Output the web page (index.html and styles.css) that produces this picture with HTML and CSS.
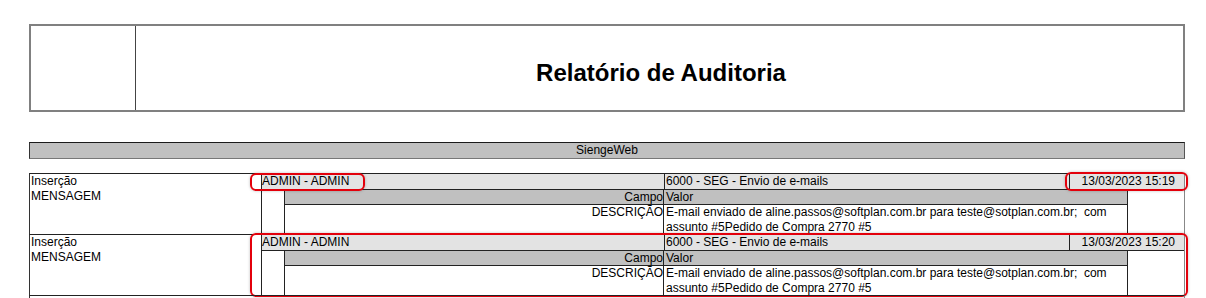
FILE: index.html
```html
<!DOCTYPE html>
<html lang="pt-BR">
<head>
<meta charset="utf-8">
<title>Relatório de Auditoria</title>
<link rel="stylesheet" href="styles.css">
</head>
<body>
<div class="page">
  <div class="header-box">
    <div class="logo-cell"></div>
    <div class="title-cell"><h1 class="title">Relatório de Auditoria</h1></div>
  </div>

  <div class="system-bar">SiengeWeb</div>

  <div class="records">
    <div class="record">
      <div class="rec-left">Inserção<br>MENSAGEM</div>
      <div class="rec-right">
        <div class="rec-head">
          <div class="c-user">ADMIN - ADMIN</div>
          <div class="c-op">6000 - SEG - Envio de e-mails</div>
          <div class="c-date">13/03/2023 15:19</div>
        </div>
        <div class="rec-body">
          <div class="indent"></div>
          <div class="fields">
            <div class="f-head">
              <div class="f-name">Campo</div>
              <div class="f-val">Valor</div>
            </div>
            <div class="f-row">
              <div class="f-name">DESCRIÇÃO</div>
              <div class="f-val">E-mail enviado de aline.passos@softplan.com.br para teste@sotplan.com.br;&nbsp; com assunto #5Pedido de Compra 2770 #5</div>
            </div>
          </div>
          <div class="trail"></div>
        </div>
      </div>
      <div class="mark mark-user"></div>
      <div class="mark mark-date"></div>
    </div>

    <div class="record">
      <div class="rec-left">Inserção<br>MENSAGEM</div>
      <div class="rec-right">
        <div class="rec-head">
          <div class="c-user">ADMIN - ADMIN</div>
          <div class="c-op">6000 - SEG - Envio de e-mails</div>
          <div class="c-date">13/03/2023 15:20</div>
        </div>
        <div class="rec-body">
          <div class="indent"></div>
          <div class="fields">
            <div class="f-head">
              <div class="f-name">Campo</div>
              <div class="f-val">Valor</div>
            </div>
            <div class="f-row">
              <div class="f-name">DESCRIÇÃO</div>
              <div class="f-val">E-mail enviado de aline.passos@softplan.com.br para teste@sotplan.com.br;&nbsp; com assunto #5Pedido de Compra 2770 #5</div>
            </div>
          </div>
          <div class="trail"></div>
        </div>
      </div>
      <div class="mark mark-all"></div>
    </div>

    <div class="record record-cut"></div>
  </div>
</div>
</body>
</html>
```

FILE: styles.css
```css
html, body {
  margin: 0;
  padding: 0;
  background: #ffffff;
}

body {
  font-family: "Liberation Sans", Arial, sans-serif;
  font-size: 12px;
  color: #000;
  overflow: hidden;
}

.page {
  margin-left: 29px;
  width: 1156px;
  padding-top: 24px;
}

.header-box {
  display: flex;
  height: 84px;
  border: 2px solid #808080;
}

.logo-cell {
  width: 104px;
  border-right: 1px solid #444;
}

.title-cell {
  flex: 1;
  display: flex;
  align-items: center;
  justify-content: center;
  padding-top: 9px;
  padding-left: 3px;
}

.title {
  margin: 0;
  font-size: 24px;
  font-weight: bold;
}

.system-bar {
  margin-top: 30px;
  height: 15px;
  line-height: 15px;
  text-align: center;
  background: #c0c0c0;
  border: 1px solid;
  border-color: #1a1a1a #555 #777 #333;
  font-size: 12px;
}

.records {
  margin-top: 14px;
}

.record {
  position: relative;
  display: flex;
  height: 60px;
  border-top: 1px solid #222;
  border-left: 1px solid #333;
  border-right: 1px solid #888;
  line-height: 15px;
}

.record-cut {
  height: 10px;
}

.rec-left {
  width: 230px;
  padding-left: 1px;
}

.rec-right {
  flex: 1;
  display: flex;
  flex-direction: column;
  border-left: 1px solid #222;
}

.rec-head {
  display: grid;
  grid-template-columns: 402px 405px 1fr;
  height: 15px;
  background: #e3e3e3;
  border-bottom: 1px solid #222;
}

.c-op {
  border-left: 1px solid #222;
  padding-left: 1px;
}

.c-date {
  border-left: 1px solid #222;
  text-align: right;
  padding-right: 9px;
}

.rec-body {
  flex: 1;
  display: flex;
}

.indent {
  width: 22px;
  border-right: 1px solid #222;
}

.fields {
  width: 842px;
  display: flex;
  flex-direction: column;
}

.f-head,
.f-row {
  display: grid;
  grid-template-columns: 379px 1fr;
}

.f-head {
  height: 14px;
  line-height: 14px;
  background: #c0c0c0;
  border-bottom: 1px solid #222;
}

.f-row {
  flex: 1;
  line-height: 14.5px;
}

.f-name {
  text-align: right;
  border-right: 1px solid #222;
}

.f-val {
  padding-left: 2px;
  padding-right: 4px;
}

.trail {
  flex: 1;
  border-left: 1px solid #222;
}

.mark {
  position: absolute;
  border: 2px solid #e3000b;
  border-radius: 6px;
  box-shadow: 0 0 3px rgba(0, 0, 0, 0.25);
  box-sizing: border-box;
}

.mark-user {
  left: 220px;
  top: -1px;
  width: 115px;
  height: 18px;
}

.mark-date {
  left: 1035px;
  top: -2px;
  width: 123px;
  height: 19px;
}

.mark-all {
  left: 220px;
  top: -2px;
  width: 938px;
  height: 64px;
}
```
